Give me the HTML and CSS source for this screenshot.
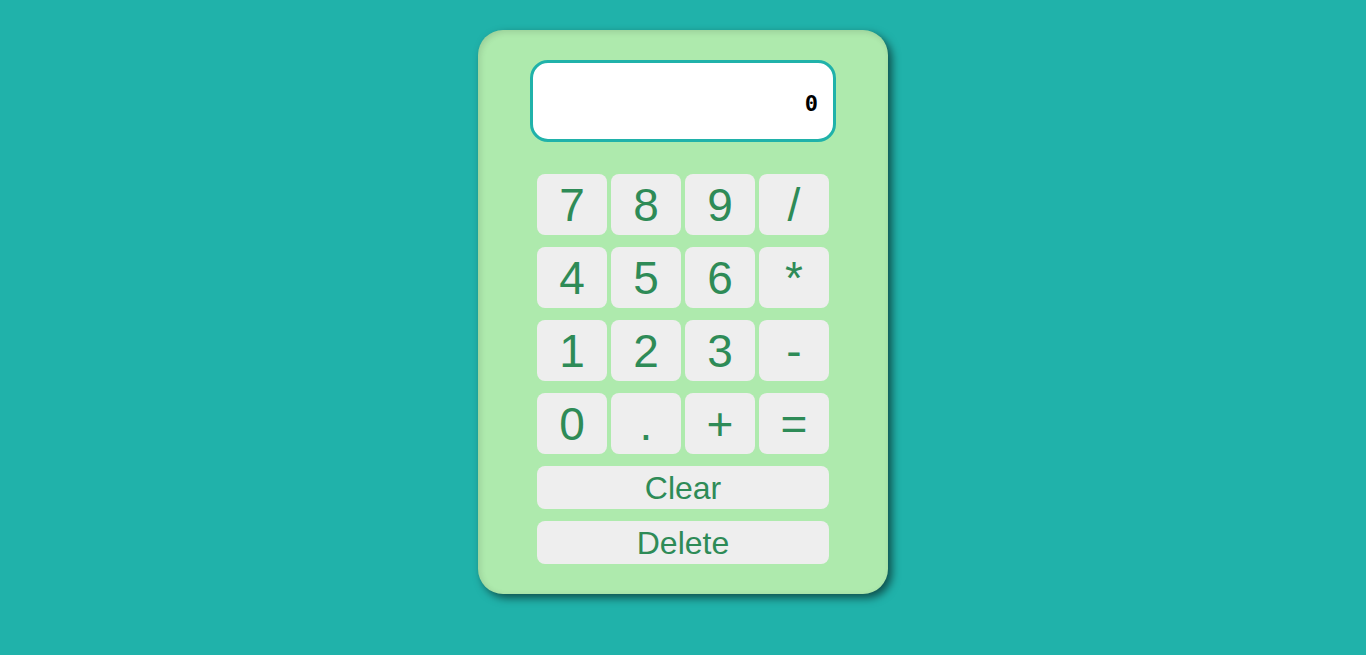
FILE: index.html
```html
<!DOCTYPE html>
<html>
<head>
<meta charset="utf-8">
<link rel="stylesheet" href="styles.css">
</head>
<body>
<div class="calculator">
  <div class="display">0</div>
  <div class="keys">
    <button class="key">7</button><button class="key">8</button><button class="key">9</button><button class="key">/</button>
    <button class="key">4</button><button class="key">5</button><button class="key">6</button><button class="key">*</button>
    <button class="key">1</button><button class="key">2</button><button class="key">3</button><button class="key">-</button>
    <button class="key">0</button><button class="key">.</button><button class="key">+</button><button class="key">=</button>
    <button class="key wide">Clear</button>
    <button class="key wide">Delete</button>
  </div>
</div>
</body>
</html>
```
FILE: styles.css
```css
html, body {
  margin: 0;
  padding: 0;
  background: #20b2aa;
  height: 100%;
}
body {
  display: flex;
  justify-content: center;
  align-items: flex-start;
  padding-top: 30px;
  box-sizing: border-box;
  font-family: "Liberation Sans", Arial, sans-serif;
}
.calculator {
  width: 410px;
  height: 564px;
  box-sizing: border-box;
  background: #aeeaad;
  border-radius: 25px;
  box-shadow: 4px 4px 8px rgba(0, 0, 0, 0.55), inset 2px 2px 6px rgba(0, 0, 0, 0.12);
  padding-top: 30px;
  display: flex;
  flex-direction: column;
  align-items: center;
}
.display {
  flex-shrink: 0;
  width: 306px;
  height: 82px;
  box-sizing: border-box;
  background: #fff;
  border: 3px solid #20b2aa;
  border-radius: 18px;
  font-family: "DejaVu Sans Mono", monospace;
  font-weight: bold;
  font-size: 22px;
  color: #000;
  display: flex;
  align-items: center;
  justify-content: flex-end;
  padding-right: 15px;
  padding-top: 4px;
}
.keys {
  margin-top: 32px;
  width: 292px;
  display: grid;
  grid-template-columns: repeat(4, 70px);
  grid-template-rows: repeat(4, 61px) 43px 43px;
  column-gap: 4px;
  row-gap: 12px;
}
.key {
  border: none;
  background: #eeeeee;
  border-radius: 8px;
  color: #2e8b57;
  font-family: "Liberation Sans", Arial, sans-serif;
  font-size: 46px;
  padding: 0;
  line-height: 1;
}
.key.wide {
  grid-column: 1 / -1;
  font-size: 32px;
}
```
